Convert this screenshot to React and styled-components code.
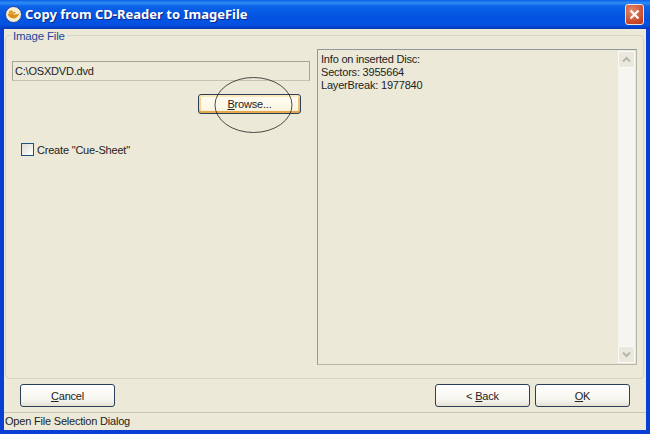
import React from "react";
import styled, { createGlobalStyle } from "styled-components";

const GlobalStyle = createGlobalStyle`
  html, body {
    margin: 0;
    padding: 0;
    background: #0831d9;
  }
`;

const Window = styled.div`
  width: 650px;
  height: 434px;
  display: flex;
  flex-direction: column;
  overflow: hidden;
  font-family: "Liberation Sans", Arial, sans-serif;
  font-size: 11px;
  letter-spacing: -0.2px;
  color: #222;
  background: #0a3fd6;
`;

const TitleBar = styled.div`
  height: 29px;
  flex: none;
  display: flex;
  align-items: center;
  padding: 0 5px;
  gap: 3px;
  background: linear-gradient(
    180deg,
    #0a5fe6 0%,
    #2f8cf5 10%,
    #0a62e8 22%,
    #0353e0 60%,
    #0452e2 85%,
    #0438b8 100%
  );
`;

const TitleText = styled.div`
  flex: 1;
  padding-bottom: 1px;
  font-family: "Noto Sans", sans-serif;
  font-size: 13px;
  font-weight: 700;
  letter-spacing: 0;
  color: #fff;
  text-shadow: 1px 1px 0 #0a2a90;
`;

const CloseButton = styled.div`
  width: 19px;
  height: 21px;
  margin-right: 1px;
  display: flex;
  align-items: center;
  justify-content: center;
  box-sizing: border-box;
  border: 1px solid #f2e4dc;
  border-radius: 3px;
  background: radial-gradient(circle at 35% 30%, #e08a6c, #c9482a 70%, #b23a20);
`;

const ClientArea = styled.div`
  flex: 1;
  display: flex;
  flex-direction: column;
  margin: 0 4px 4px 4px;
  background: #ece9d8;
  min-height: 0;
`;

const GroupBox = styled.fieldset`
  height: 344px;
  margin: 6px 2px 0 1px;
  padding: 0;
  flex: none;
  box-sizing: border-box;
  position: relative;
  display: flex;
  border: 1px solid #d6d4c3;
  border-radius: 4px;
`;

const Legend = styled.span`
  position: absolute;
  top: -6px;
  left: 5px;
  padding: 0 2px;
  line-height: 12px;
  font-size: 11.5px;
  color: #24479c;
  background: #ece9d8;
`;

const LeftColumn = styled.div`
  width: 298px;
  margin: 25px 0 0 6px;
  display: flex;
  flex-direction: column;
  align-items: flex-start;
`;

const PathField = styled.div`
  width: 298px;
  height: 20px;
  box-sizing: border-box;
  display: flex;
  align-items: center;
  padding-left: 2px;
  border: 1px solid #a3a396;
  border-bottom-color: #c4c4b4;
`;

const BrowseRow = styled.div`
  align-self: flex-end;
  position: relative;
  margin: 13px 9px 0 0;
`;

const Button = styled.div`
  width: ${(p) => p.$width || 95}px;
  height: ${(p) => p.$height || 23}px;
  box-sizing: border-box;
  display: flex;
  align-items: center;
  justify-content: center;
  border: 1px solid #2b3f58;
  border-radius: 3px;
  background: ${(p) =>
    p.$focused
      ? "linear-gradient(180deg, #fffdf2 0%, #fdf8e6 70%, #f5ecd2 100%)"
      : "linear-gradient(180deg, #fff 0%, #f6f5ee 70%, #e4e1d4 100%)"};
  box-shadow: ${(p) =>
    p.$focused
      ? "inset 0 2px 0 #fbe9bd, inset 0 -2px 0 #e5a849, inset 2px 0 0 #f6d592, inset -2px 0 0 #f0c274"
      : "none"};
  u {
    text-underline-offset: 1px;
  }
`;

const Circle = styled.svg`
  position: absolute;
  left: 16px;
  top: -17px;
  pointer-events: none;
`;

const CheckRow = styled.div`
  display: flex;
  align-items: center;
  gap: 3px;
  margin: 29px 0 0 9px;
`;

const CheckBox = styled.div`
  width: 13px;
  height: 13px;
  box-sizing: border-box;
  border: 1px solid #1c5180;
  background: linear-gradient(135deg, #dcdcd7, #fff);
`;

const InfoPanel = styled.div`
  width: 320px;
  height: 316px;
  margin: 13px 0 0 7px;
  box-sizing: border-box;
  display: flex;
  border: 1px solid #b4b6a9;
  border-top-color: #8f9a9e;
  border-left-color: #8f9a9e;
  background: #ece9d8;
`;

const InfoText = styled.div`
  flex: 1;
  padding: 3px 0 0 3px;
  line-height: 13px;
`;

const ScrollTrack = styled.div`
  width: 17px;
  margin: 1px;
  display: flex;
  flex-direction: column;
  justify-content: space-between;
  background: #f6f5ef;
`;

const ScrollArrow = styled.div`
  height: 17px;
  display: flex;
  align-items: center;
  justify-content: center;
  border: 1px solid #fbfaf6;
  border-radius: 2px;
  box-sizing: border-box;
  background: #ebe9dd;
`;

const ButtonRow = styled.div`
  height: 23px;
  flex: none;
  display: flex;
  gap: 5px;
  margin: 5px 16px 0 16px;
`;

const Spacer = styled.div`
  flex: 1;
`;

const StatusBar = styled.div`
  margin-top: 5px;
  flex: 1;
  padding: 1px 0 0 1px;
  border-top: 1px solid #c9c6b4;
  line-height: 14px;
`;

const AppIcon = () => (
  <svg width="17" height="17" viewBox="0 0 17 17">
    <circle cx="8.5" cy="8.5" r="8" fill="#f7efd6" stroke="#1c3f9a" strokeWidth="1" />
    <path d="M2.5 8.5 C4.5 6.5 7.5 7 9 8.5 L14.5 8 L12 11 C10 13.5 5 13 2.5 8.5 Z" fill="#d98f1e" />
    <circle cx="6" cy="6.5" r="2.2" fill="#e3a02c" />
    <path d="M8 6.5 L11 6 L9 8 Z" fill="#b5701a" />
  </svg>
);

const App = () => (
  <>
    <GlobalStyle />
    <Window>
      <TitleBar>
        <AppIcon />
        <TitleText>Copy from CD-Reader to ImageFile</TitleText>
        <CloseButton>
          <svg width="11" height="11" viewBox="0 0 11 11">
            <path d="M1.5 1.5 L9.5 9.5 M9.5 1.5 L1.5 9.5" stroke="#fff" strokeWidth="2.2" />
          </svg>
        </CloseButton>
      </TitleBar>
      <ClientArea>
        <GroupBox>
          <Legend>Image File</Legend>
          <LeftColumn>
            <PathField>C:\OSXDVD.dvd</PathField>
            <BrowseRow>
              <Button $focused $width={103} $height={20}>
                <span>
                  <u>B</u>rowse...
                </span>
              </Button>
              <Circle width="80" height="58" viewBox="0 0 80 58">
                <ellipse cx="39.5" cy="28" rx="38.5" ry="27.5" fill="none" stroke="#222" strokeWidth="0.8" />
              </Circle>
            </BrowseRow>
            <CheckRow>
              <CheckBox />
              <span>Create "Cue-Sheet"</span>
            </CheckRow>
          </LeftColumn>
          <InfoPanel>
            <InfoText>
              Info on inserted Disc:
              <br />
              Sectors: 3955664
              <br />
              LayerBreak: 1977840
            </InfoText>
            <ScrollTrack>
              <ScrollArrow>
                <svg width="9" height="7" viewBox="0 0 9 7">
                  <path d="M1 5.5 L4.5 2 L8 5.5" fill="none" stroke="#b5b5a8" strokeWidth="2" />
                </svg>
              </ScrollArrow>
              <ScrollArrow>
                <svg width="9" height="7" viewBox="0 0 9 7">
                  <path d="M1 1.5 L4.5 5 L8 1.5" fill="none" stroke="#b5b5a8" strokeWidth="2" />
                </svg>
              </ScrollArrow>
            </ScrollTrack>
          </InfoPanel>
        </GroupBox>
        <ButtonRow>
          <Button>
            <span>
              <u>C</u>ancel
            </span>
          </Button>
          <Spacer />
          <Button>
            <span>
              &lt; <u>B</u>ack
            </span>
          </Button>
          <Button>
            <span>
              <u>O</u>K
            </span>
          </Button>
        </ButtonRow>
        <StatusBar>Open File Selection Dialog</StatusBar>
      </ClientArea>
    </Window>
  </>
);

export default App;
